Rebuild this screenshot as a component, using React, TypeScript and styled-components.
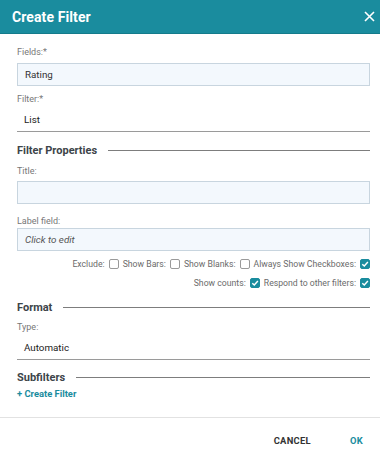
import React from 'react';
import styled, {createGlobalStyle} from 'styled-components';

const GlobalStyle = createGlobalStyle`
  html, body {
    margin: 0;
    padding: 0;
    background: #fff;
  }
  body {
    font-family: Roboto, "Liberation Sans", Arial, sans-serif;
  }
`;

const teal = '#1a8c9e';

const Dialog = styled.div`
  width: 380px;
  height: 454px;
  display: flex;
  flex-direction: column;
  background: #fff;
`;

const Header = styled.div`
  height: 33px;
  border-bottom: 1px solid #147b8b;
  background: ${teal};
  display: flex;
  align-items: center;
  justify-content: space-between;
  padding: 0 3px 0 12px;
`;

const Title = styled.h1`
  margin: 0;
  font-size: 14px;
  font-weight: 700;
  color: #fff;
  letter-spacing: 0.1px;
`;

const Close = styled.button`
  border: 0;
  background: none;
  padding: 0;
  width: 16px;
  height: 16px;
  display: flex;
  align-items: center;
  justify-content: center;
  cursor: pointer;
`;

const Body = styled.div`
  flex: 1;
  padding: 12px 10px 0 17px;
  display: flex;
  flex-direction: column;
`;

const Label = styled.label<{ $top?: number }>`
  display: block;
  font-size: 9px;
  line-height: 12px;
  color: #777;
  margin-top: ${p => p.$top ?? 0}px;
`;

const Input = styled.div<{ $top?: number; $placeholder?: boolean }>`
  box-sizing: border-box;
  height: 23px;
  margin-top: ${p => p.$top ?? 0}px;
  border: 1px solid #c8d5df;
  background: #f3f8fd;
  padding: 0 7px;
  display: flex;
  align-items: center;
  font-size: 9.8px;
  color: ${p => (p.$placeholder ? '#555' : '#333')};
  font-style: ${p => (p.$placeholder ? 'italic' : 'normal')};
`;

const Select = styled.div<{ $top?: number }>`
  box-sizing: border-box;
  height: 27px;
  margin-top: ${p => p.$top ?? 0}px;
  border-bottom: 1px solid #9a9a9a;
  padding: 2px 7px 0;
  display: flex;
  align-items: center;
  font-size: 9.8px;
  color: #222;
`;

const Section = styled.div<{ $top: number }>`
  display: flex;
  align-items: center;
  gap: 11px;
  margin-top: ${p => p.$top}px;
  height: 16px;
`;

const SectionTitle = styled.h2`
  margin: 0;
  font-size: 11px;
  font-weight: 700;
  color: #3d4449;
  white-space: nowrap;
`;

const Rule = styled.div`
  flex: 1;
  height: 1px;
  background: #7d7d7d;
`;

const OptionRow = styled.div<{ $top: number }>`
  display: flex;
  justify-content: flex-end;
  align-items: center;
  gap: 4px;
  margin-top: ${p => p.$top}px;
  height: 13px;
  font-size: 8.7px;
  color: #6b6b6b;
`;

const Option = styled.span`
  display: flex;
  align-items: center;
  gap: 4px;
`;

const Box = styled.span<{ $checked?: boolean }>`
  box-sizing: border-box;
  width: 10px;
  height: 10px;
  border-radius: 2px;
  border: 1px solid ${p => (p.$checked ? teal : '#9a9a9a')};
  background: ${p => (p.$checked ? teal : '#fff')};
  display: flex;
  align-items: center;
  justify-content: center;
`;

const AddLink = styled.a`
  margin-top: 3px;
  font-size: 9.4px;
  font-weight: 700;
  color: ${teal};
  line-height: 12px;
  text-decoration: none;
`;

const Footer = styled.div`
  height: 37px;
  box-sizing: border-box;
  border-top: 1px solid #e2e2e2;
  display: flex;
  justify-content: flex-end;
  align-items: center;
  padding: 8px 17px 0 0;
`;

const FooterButton = styled.button<{ $primary?: boolean }>`
  border: 0;
  background: none;
  font-family: inherit;
  font-size: 9.4px;
  font-weight: 700;
  letter-spacing: 0.3px;
  color: ${p => (p.$primary ? teal : '#333')};
  padding: 0;
  margin-left: ${p => (p.$primary ? 39 : 0)}px;
  cursor: pointer;
`;

const Check = () => (
  <svg width="8" height="8" viewBox="0 0 10 10">
    <path d="M1.6 5.3 L4.1 7.6 L8.6 2.5" fill="none" stroke="#fff" strokeWidth="1.8" />
  </svg>
);

const Checkbox: React.FC<{ label: string; checked?: boolean }> = ({label, checked}) => (
  <Option>
    {label}
    <Box $checked={checked}>{checked && <Check />}</Box>
  </Option>
);

const App: React.FC = () => (
  <Dialog>
    <GlobalStyle />
    <Header>
      <Title>Create Filter</Title>
      <Close aria-label="Close">
        <svg width="11" height="11" viewBox="0 0 11 11">
          <path d="M1 1 L10 10 M10 1 L1 10" stroke="#fff" strokeWidth="1.6" />
        </svg>
      </Close>
    </Header>

    <Body>
      <Label>Fields:*</Label>
      <Input $top={5}>Rating</Input>

      <Label $top={7}>Filter:*</Label>
      <Select>List</Select>

      <Section $top={10}>
        <SectionTitle>Filter Properties</SectionTitle>
        <Rule />
      </Section>

      <Label $top={7}>Title:</Label>
      <Input $top={4} />

      <Label $top={11}>Label field:</Label>
      <Input $top={1} $placeholder>Click to edit</Input>

      <OptionRow $top={6}>
        <Checkbox label="Exclude:" />
        <Checkbox label="Show Bars:" />
        <Checkbox label="Show Blanks:" />
        <Checkbox label="Always Show Checkboxes:" checked />
      </OptionRow>
      <OptionRow $top={6}>
        <Checkbox label="Show counts:" checked />
        <Checkbox label="Respond to other filters:" checked />
      </OptionRow>

      <Section $top={10}>
        <SectionTitle>Format</SectionTitle>
        <Rule />
      </Section>

      <Label $top={6}>Type:</Label>
      <Select>Automatic</Select>

      <Section $top={9}>
        <SectionTitle>Subfilters</SectionTitle>
        <Rule />
      </Section>

      <AddLink href="#">+ Create Filter</AddLink>
    </Body>

    <Footer>
      <FooterButton>CANCEL</FooterButton>
      <FooterButton $primary>OK</FooterButton>
    </Footer>
  </Dialog>
);

export default App;
